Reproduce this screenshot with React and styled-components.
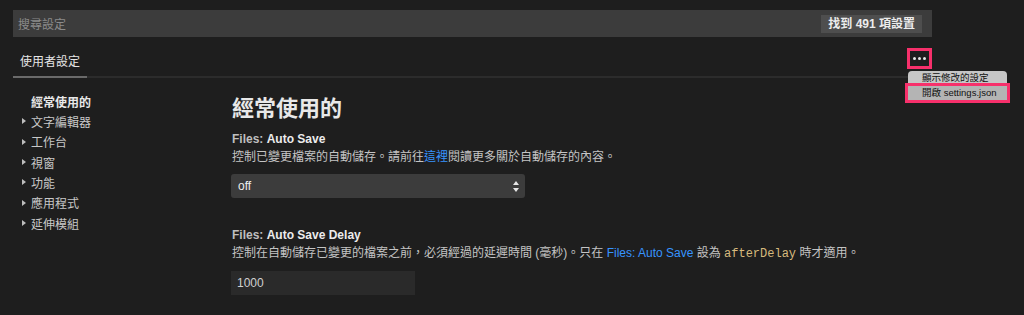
import React from "react";
import styled, { createGlobalStyle } from "styled-components";

const GlobalStyle = createGlobalStyle`
  html, body { margin: 0; padding: 0; background: #1e1e1e; }
  body {
    font-family: "Liberation Sans", "Noto Sans CJK TC", sans-serif;
    color: #cccccc;
    -webkit-font-smoothing: antialiased;
  }
`;

const PINK = "#f7306b";

const Page = styled.div`
  width: 1024px;
  height: 315px;
  overflow: hidden;
  padding: 10px 0 0 13px;
  box-sizing: border-box;
`;

const Inner = styled.div`
  width: 919px;
`;

const SearchBar = styled.div`
  height: 27px;
  background: #3c3c3c;
  display: flex;
  align-items: center;
  justify-content: space-between;
  padding: 0 10px 0 5px;
`;

const Placeholder = styled.span`
  font-family: "Noto Sans CJK TC", sans-serif;
  font-size: 12px;
  color: #8b8b8b;
`;

const Badge = styled.span`
  height: 18px;
  line-height: 18px;
  padding: 0 7px;
  background: #4e4e4e;
  color: #ececec;
  font-size: 12px;
  font-weight: 700;
  font-family: "Liberation Sans", "Noto Sans CJK TC", sans-serif;
`;

const HeaderRow = styled.div`
  position: relative;
  height: 41px;
  display: flex;
  justify-content: space-between;
  align-items: flex-start;
  box-shadow: inset 0 -2px 0 #2c2c2c;
`;

const Tab = styled.div`
  padding: 15px 7px 6px;
  line-height: 18px;
  font-family: "Noto Sans CJK TC", sans-serif;
  font-size: 12px;
  color: #e6e6e6;
  border-bottom: 2px solid #6a6a6a;
`;

const MoreButton = styled.div`
  margin-top: 11px;
  width: 19px;
  height: 15px;
  border: 3px solid ${PINK};
  background: #1e1e1e;
  display: flex;
  align-items: center;
  justify-content: center;
  gap: 2px;
`;

const Dot = styled.span`
  width: 3px;
  height: 3px;
  background: #e8e8e8;
  border-radius: 50%;
`;

const Menu = styled.div`
  position: absolute;
  left: 895px;
  top: 34px;
  width: 99px;
  background: #c6c6c6;
  border-radius: 4px;
  padding: 0 0 1px;
  z-index: 2;
`;

const MenuItem = styled.div`
  height: 14px;
  line-height: 14px;
  padding-left: 14px;
  font-family: "Liberation Sans", "Noto Sans CJK TC", sans-serif;
  font-size: 9.5px;
  color: #111111;
  background: ${(p) => (p.$active ? "#b4b4b4" : "transparent")};
  box-shadow: ${(p) => (p.$active ? `0 0 0 3px ${PINK}` : "none")};
  margin-top: ${(p) => (p.$active ? "1px" : "0")};
  white-space: nowrap;
`;

const Main = styled.div`
  display: flex;
`;

const Sidebar = styled.div`
  width: 219px;
  flex: none;
  padding-top: 13px;
`;

const NavItem = styled.div`
  display: flex;
  align-items: center;
  height: 20.33px;
  padding-left: 9px;
  gap: 5px;
  font-family: "Noto Sans CJK TC", sans-serif;
  font-size: 12px;
  color: ${(p) => (p.$bold ? "#e8e8e8" : "#c8c8c8")};
  font-weight: ${(p) => (p.$bold ? 700 : 400)};
`;

const Arrow = styled.span`
  width: 0;
  height: 0;
  border-top: 3.5px solid transparent;
  border-bottom: 3.5px solid transparent;
  border-left: 4px solid ${(p) => (p.$hidden ? "transparent" : "#bdbdbd")};
`;

const Content = styled.div`
  padding-top: 13px;
  display: flex;
  flex-direction: column;
  align-items: flex-start;
`;

const Heading = styled.h1`
  margin: 0;
  font-family: "Noto Sans CJK TC", sans-serif;
  font-size: 22px;
  line-height: 30px;
  font-weight: 700;
  color: #e8e8e8;
`;

const SettingTitle = styled.div`
  margin-top: ${(p) => p.$gap}px;
  line-height: 18px;
  font-size: 12px;
  color: #bfbfbf;
  font-weight: 700;
  b {
    color: #ececec;
  }
`;

const Desc = styled.div`
  line-height: 18px;
  font-family: "Liberation Sans", "Noto Sans CJK TC", sans-serif;
  font-size: 12px;
  color: #c4c4c4;
  white-space: nowrap;
`;

const Link = styled.span`
  color: #3794ff;
`;

const Code = styled.span`
  font-family: "Liberation Mono", "DejaVu Sans Mono", monospace;
  font-size: 12px;
  color: #d7ba7d;
`;

const Select = styled.div`
  margin-top: 8px;
  margin-left: -1px;
  width: 294px;
  height: 24px;
  box-sizing: border-box;
  background: #3c3c3c;
  border-radius: 3px;
  display: flex;
  align-items: center;
  justify-content: space-between;
  padding: 0 6px 0 7px;
  font-size: 12px;
  color: #eeeeee;
`;

const Input = styled.div`
  margin-top: 8px;
  margin-left: -1px;
  width: 184px;
  height: 24px;
  box-sizing: border-box;
  background: #2a2a2a;
  display: flex;
  align-items: center;
  padding-left: 6px;
  font-size: 12px;
  color: #d0d0d0;
`;

const navItems = ["文字編輯器", "工作台", "視窗", "功能", "應用程式", "延伸模組"];

export default function App() {
  return (
    <>
      <GlobalStyle />
      <Page>
        <Inner>
          <SearchBar>
            <Placeholder>搜尋設定</Placeholder>
            <Badge>找到 491 項設置</Badge>
          </SearchBar>
          <HeaderRow>
            <Tab>使用者設定</Tab>
            <MoreButton>
              <Dot />
              <Dot />
              <Dot />
            </MoreButton>
            <Menu>
              <MenuItem>顯示修改的設定</MenuItem>
              <MenuItem $active>開啟 settings.json</MenuItem>
            </Menu>
          </HeaderRow>
          <Main>
            <Sidebar>
              <NavItem $bold>
                <Arrow $hidden />
                經常使用的
              </NavItem>
              {navItems.map((n) => (
                <NavItem key={n}>
                  <Arrow />
                  {n}
                </NavItem>
              ))}
            </Sidebar>
            <Content>
              <Heading>經常使用的</Heading>
              <SettingTitle $gap={9}>
                Files: <b>Auto Save</b>
              </SettingTitle>
              <Desc>
                控制已變更檔案的自動儲存。請前往<Link>這裡</Link>閱讀更多關於自動儲存的內容。
              </Desc>
              <Select>
                <span>off</span>
                <svg width="6" height="11" viewBox="0 0 6 11">
                  <path d="M3 0 L6 4 L0 4 Z" fill="#e6e6e6" />
                  <path d="M0 7 L6 7 L3 11 Z" fill="#e6e6e6" />
                </svg>
              </Select>
              <SettingTitle $gap={28}>
                Files: <b>Auto Save Delay</b>
              </SettingTitle>
              <Desc>
                控制在自動儲存已變更的檔案之前，必須經過的延遲時間 (毫秒)。只在 <Link>Files: Auto Save</Link> 設為 <Code>afterDelay</Code> 時才適用。
              </Desc>
              <Input>1000</Input>
            </Content>
          </Main>
        </Inner>
      </Page>
    </>
  );
}
